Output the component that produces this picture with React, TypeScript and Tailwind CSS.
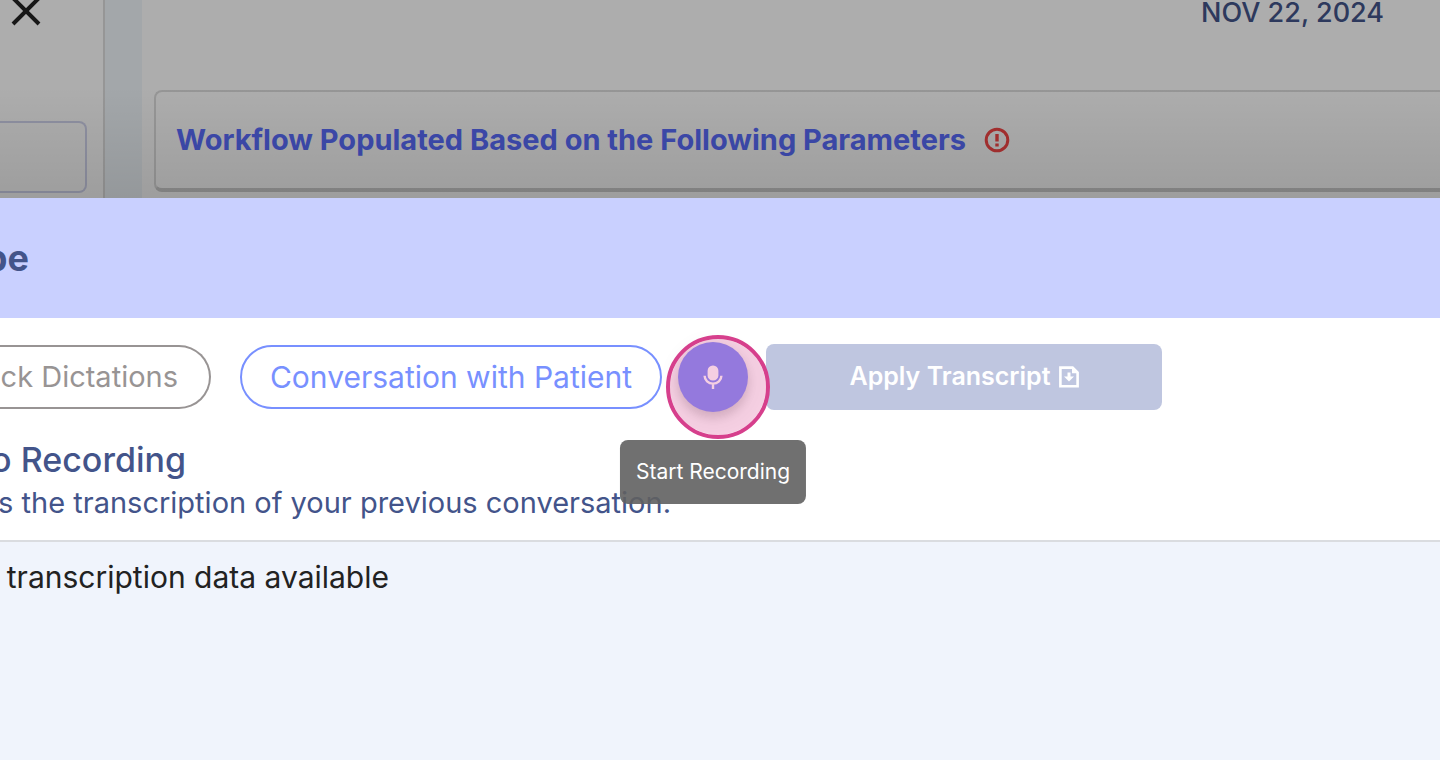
function CloseIcon() {
  return (
    <svg width="30" height="30" viewBox="0 0 30 30" aria-hidden="true">
      <path d="M2 2 28 28M28 2 2 28" stroke="currentColor" strokeWidth="4" fill="none" />
    </svg>
  );
}

function AlertIcon() {
  return (
    <svg width="26" height="26" viewBox="0 0 26 26" aria-hidden="true" fill="none" className="shrink-0">
      <circle cx="13" cy="13" r="10.8" stroke="currentColor" strokeWidth="3" />
      <path d="M13 7v7.4M13 16.4v3" stroke="currentColor" strokeWidth="3.4" />
    </svg>
  );
}

function MicIcon() {
  return (
    <svg width="20" height="24" viewBox="0 0 20 24" aria-hidden="true" fill="none">
      <rect x="4.6" y="0.6" width="10.8" height="15" rx="5.2" fill="currentColor" />
      <path d="M1.6 10.8a8.4 7.8 0 0 0 16.8 0M10 18.5V24" stroke="currentColor" strokeWidth="2.4" />
    </svg>
  );
}

function FileDownIcon() {
  return (
    <svg width="20" height="22" viewBox="0 0 20 22" aria-hidden="true" fill="none">
      <path d="M1.4 1.6h12.2l5 5v13.6H1.4z" stroke="currentColor" strokeWidth="2.6" />
      <path d="M13 1v6.2h6.2z" fill="currentColor" />
      <path d="M10 6.5v5" stroke="currentColor" strokeWidth="3" />
      <path d="M5 10.4h10L10 15.6z" fill="currentColor" />
    </svg>
  );
}

function Workspace() {
  return (
    <div className="relative flex h-[198px] overflow-hidden bg-white">
      <aside className="flex w-[105px] shrink-0 flex-col justify-between border-r-2 border-[#dedede] pb-[5px] pr-4">
        <button type="button" aria-label="Close" className="-mt-1 ml-[11px] w-fit text-[#222222]">
          <CloseIcon />
        </button>
        <input
          aria-label="Search"
          className="h-[72px] w-full rounded-r-lg border-2 border-l-0 border-[#d2d5ee] bg-transparent"
        />
      </aside>
      <div className="w-[37px] shrink-0 bg-[#f0f7fb]" />
      <main className="flex min-w-0 flex-1 flex-col pl-3">
        <p className="h-[90px] pr-14 text-right text-[27px] leading-[26px] font-medium text-[#43548a]">
          NOV 22, 2024
        </p>
        <section className="flex h-[102px] items-center gap-[18px] rounded-l-lg border-2 border-r-0 border-b-4 border-[#dedede] border-b-[#cecece] pl-5 text-[#5b6dff]">
          <h2 className="text-[29px] leading-8 font-bold whitespace-nowrap">
            Workflow Populated Based on the Following Parameters
          </h2>
          <span className="text-[#f74747]">
            <AlertIcon />
          </span>
        </section>
      </main>
      <div className="pointer-events-none absolute inset-0 bg-black/32" />
      {/* shade cast upwards by the drawer */}
      <div className="pointer-events-none absolute inset-x-0 bottom-0 h-28 bg-linear-to-t from-black/9 to-transparent" />
    </div>
  );
}

function RecordButton() {
  return (
    <div className="relative mr-[18px] ml-4 size-[70px] shrink-0">
      <button
        type="button"
        aria-label="Start Recording"
        className="flex size-full items-center justify-center rounded-full bg-[#7e8cf9] text-white shadow-[0_6px_10px_rgba(0,0,0,0.12),0_4px_20px_rgba(0,0,0,0.1)]"
      >
        <MicIcon />
      </button>
      <span className="pointer-events-none absolute -top-[7px] -left-3 size-[104px] rounded-full border-4 border-[#d63f8c] bg-[#d63f8c]/25 bg-clip-padding" />
      <div
        role="tooltip"
        className="absolute top-[98px] left-1/2 z-10 -translate-x-1/2 rounded-lg bg-[#616161]/90 px-4 py-[18px] text-[21px] leading-7 whitespace-nowrap text-white"
      >
        Start Recording
      </div>
    </div>
  );
}

function ScribeDrawer() {
  return (
    <div className="flex flex-1 flex-col bg-white">
      <header className="flex h-[120px] items-center bg-[#c9d0ff]">
        <h1 className="flex w-[29px] justify-end text-[36px] leading-[54px] font-bold text-[#43548a]">be</h1>
      </header>
      <div className="flex items-center pt-6 text-[29px]">
        <button
          type="button"
          className="flex h-16 w-[211px] shrink-0 items-center justify-end rounded-r-full border-2 border-l-0 border-[#989494] pr-[31px] whitespace-nowrap text-[#989494]"
        >
          ck Dictations
        </button>
        <button
          type="button"
          className="ml-[29px] h-16 w-[422px] shrink-0 rounded-full border-2 border-[#7890ff] text-[30px] whitespace-nowrap text-[#7890ff]"
        >
          Conversation with Patient
        </button>
        <RecordButton />
        <button
          type="button"
          className="flex h-[66px] w-[396px] items-center justify-center gap-2 rounded-lg bg-[#bfc6e0] text-[25px] font-semibold whitespace-nowrap text-white"
        >
          Apply Transcript
          <FileDownIcon />
        </button>
      </div>
      <div className="border-b-2 border-[#dadce0] pt-[26px] pb-4 text-[#43548a]">
        <h2 className="flex w-[186px] justify-end text-[34px] leading-[44px] font-medium whitespace-nowrap">
          o Recording
        </h2>
        <p className="flex w-[671px] justify-end text-[29px] leading-[42px] whitespace-nowrap">
          s the transcription of your previous conversation.
        </p>
      </div>
      <div className="flex-1 bg-[#f0f4fc] pt-3.5">
        <p className="flex w-[389px] justify-end text-[30px] leading-[42px] whitespace-nowrap text-[#222222]">
          transcription data available
        </p>
      </div>
    </div>
  );
}

export default function App() {
  return (
    <div className="flex min-h-screen flex-col overflow-hidden font-['Inter',sans-serif]">
      <Workspace />
      <ScribeDrawer />
    </div>
  );
}
